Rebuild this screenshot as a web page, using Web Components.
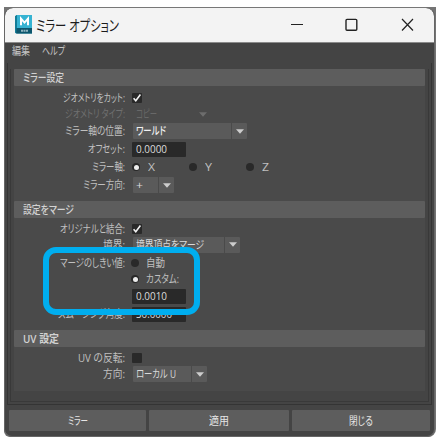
<!DOCTYPE html>
<html lang="ja">
<head>
<meta charset="utf-8">
<title>ミラー オプション</title>
<style>
html,body{margin:0;width:440px;height:440px;overflow:hidden;background:#fff}
body{font-family:"Open Sans","Noto Sans CJK JP",sans-serif;font-size:11px}
</style>
</head>
<body>
<mirror-window></mirror-window>
<script>
const define = (name, html, setup) => {
  const t = document.createElement('template');
  t.innerHTML = html;
  customElements.define(name, class extends HTMLElement {
    constructor() { super(); this.attachShadow({mode:'open'}).append(t.content.cloneNode(true)); }
    connectedCallback() { if (setup) setup(this, this.shadowRoot); }
  });
};

// Text condensed or widened to the width given in pixels by "w".
define('fit-text', `<style>
:host{display:inline-block;white-space:pre;line-height:16px;height:16px;flex:none}
span{display:inline-block;transform-origin:0 50%;font-feature-settings:"palt"}
</style><span><slot></slot></span>`, (el, root) => {
  const s = root.querySelector('span'), w = +el.getAttribute('w');
  const natural = s.getBoundingClientRect().width;
  el.style.width = w + 'px';
  if (natural) s.style.transform = 'scaleX(' + w / natural + ')';
});

define('app-icon', `<style>:host{display:block;width:18px;height:19px;flex:none}svg{display:block}</style>
<svg width="18" height="19" viewBox="0 0 18 19"><path d="M0 1.2 2 0h14.5L17 1v17.4H1.5L0 17z" fill="#168ba8"/><path d="M2 0h15v13H2z" fill="#36b3d2"/><path d="M0 1.2 2 0v13l-1 5.4-1-1z" fill="#147c97"/><path d="M1.5 13H17v5.6H1.2z" fill="#0d566d"/><path d="M6 10.2V3.6l3.5 4L13 3.6v6.6" fill="none" stroke="#fff" stroke-width="2"/><path d="M6 15.8h7" stroke="#8fb4c0" stroke-width="2" stroke-dasharray="2 .5"/></svg>`);

define('window-controls', `<style>:host{display:block;flex:none;margin-left:auto;width:144px;height:35px}svg{display:block}</style>
<svg width="144" height="35" viewBox="0 0 144 35" fill="none" stroke="#222" stroke-width="1.2"><path d="M1 16.5h12"/><rect x="56" y="11.4" width="10.8" height="10.8" rx="1" stroke-width="1.4"/><path d="m112 11 11 11.5M123 11l-11 11.5"/></svg>`);

define('title-bar', `<style>
:host{display:flex;align-items:center;height:34px;background:#f3f3f3;border-radius:8px 8px 0 0;padding-left:10px;font-size:15px;color:#1c1c1c;border-bottom:1px solid #8a8a8a}
app-icon{margin-top:-1px}
fit-text{margin:-1px 0 0 3px}
</style><app-icon></app-icon><fit-text w="83"><slot></slot></fit-text><window-controls></window-controls>`);

define('menu-bar', `<style>:host{display:flex;gap:12px;height:20px;padding:0 7px;box-sizing:border-box;color:#c5c5c5}</style><slot></slot>`);

define('option-section', `<style>
:host{display:block;background:#4a4a4a}
header{height:17px;background:#5d5d5d;display:flex;align-items:center;padding-left:9px;color:#d2d2d2;font-weight:500;box-sizing:border-box;border-radius:1px}
:host([strong]) header{font-weight:600}
</style><header><slot name="title"></slot></header><slot></slot>`);

define('option-row', `<style>
:host{display:flex;align-items:center;color:#c0c0c0}
.label{width:111px;flex:none;display:flex;justify-content:flex-end}
.field{margin-left:7px;display:flex;align-items:center}
:host([off]){color:#707070}
</style><div class="label"><slot name="label"></slot></div><div class="field"><slot></slot></div>`,
 el => { el.style.height = el.getAttribute('h') + 'px'; });

define('check-box', `<style>:host{display:block;width:10px;height:10px;background:#292929;border-radius:1px}svg{display:none}:host([checked]) svg{display:block}</style>
<svg width="10" height="10" viewBox="0 0 10 10"><path d="m1.6 5.2 2.2 2.5L8.4 1.6" stroke="#f2f2f2" stroke-width="1.6" fill="none"/></svg>`);

define('radio-dot', `<style>
:host{display:flex;align-items:center;height:16px}
i{width:8px;height:8px;border-radius:50%;background:#292929;display:flex;align-items:center;justify-content:center;margin-right:7px;flex:none}
:host([checked]) i::after{content:"";width:5px;height:5px;border-radius:50%;background:#ececec}
</style><i></i><slot></slot>`);

define('combo-box', `<style>
:host{display:flex;gap:1px;height:16px;margin-left:1px}
.v{background:#5a5a5a;padding-left:3px;box-sizing:border-box;display:flex;align-items:center;color:#dadada;border-radius:1px 0 0 1px}
.a{width:15px;background:#5a5a5a;display:flex;align-items:center;justify-content:center;border-radius:0 1px 1px 0}
.a svg{fill:#cdcdcd}
:host([bright]) .v{color:#f0f0f0;font-weight:500}
:host([off]) .v{background:none;color:#686868}
:host([off]) .a{background:none}
:host([off]) .a svg{fill:#6d6d6d}
</style><div class="v"><slot></slot></div><div class="a"><svg width="8" height="5" viewBox="0 0 8 5"><path d="M0 .3h8L4 4.8z"/></svg></div>`,
 (el, root) => { root.querySelector('.v').style.width = el.getAttribute('w') + 'px'; });

define('number-field', `<style>:host{display:flex;align-items:center;width:54px;height:15px;background:#292929;border-radius:1px;box-sizing:border-box;padding-left:4px;color:#dadada}</style><slot></slot>`);

define('push-button', `<style>:host{display:flex;align-items:center;justify-content:center;background:#5d5d5d;color:#e6e6e6;border-radius:1px;height:21px}</style><slot></slot>`);

define('highlight-frame', `<style>:host{position:absolute;left:43px;top:247px;width:157px;height:68px;box-sizing:border-box;border:6px solid #00aeef;border-radius:13px}</style>`);

define('mirror-window', `<style>
:host{display:block;width:440px;height:440px;position:relative}
.win{box-sizing:border-box;margin:0;width:431px;height:430px;border:1px solid #666;border-top-color:#777;background:#444;border-radius:9px 9px 8px 8px;overflow:hidden}
.back{position:absolute;left:4px;top:7px;width:432px;height:430px;background:#747474;border-radius:0 0 8px 6px}
.page{padding:7px 0 0 4px;position:relative}
.panel{box-sizing:border-box;margin:0 2px;height:342px;border:1px solid #343434;border-top:0;padding:6px 2px 3px 2px;position:relative}
.inner{box-sizing:border-box;height:333px;border:1px solid #393939;border-top:0;padding:0 3px 10px}
.one{height:132px}.two{height:129px}.three{height:61px}
.body{padding-top:4px}.two .body,.three .body{padding-top:3px}
.set{display:flex}
.set radio-dot{width:57px;box-sizing:border-box}
.set radio-dot fit-text{margin-left:1px}
.shift{margin-left:-1px}
footer{display:grid;grid-template-columns:137px 140px 138px;gap:3px;padding:5px 4px}
</style>
<div class="back"></div>
<div class="page"><div class="win">
<title-bar>ミラー オプション</title-bar>
<menu-bar><fit-text w="18">編集</fit-text><fit-text w="23">ヘルプ</fit-text></menu-bar>
<div class="panel"><div class="inner">
<option-section class="one"><fit-text slot="title" w="41">ミラー設定</fit-text><div class="body">
<option-row h="16"><fit-text slot="label" w="62">ジオメトリをカット:</fit-text><check-box checked></check-box></option-row>
<option-row h="16" off><fit-text slot="label" w="60">ジオメトリ タイプ:</fit-text><combo-box w="61" off><fit-text w="21">コピー</fit-text></combo-box></option-row>
<option-row h="18"><fit-text slot="label" w="60">ミラー軸の位置:</fit-text><combo-box w="98" bright><fit-text w="30">ワールド</fit-text></combo-box></option-row>
<option-row h="18"><fit-text slot="label" w="37">オフセット:</fit-text><number-field><fit-text w="31">0.0000</fit-text></number-field></option-row>
<option-row h="18"><fit-text slot="label" w="33">ミラー軸:</fit-text><div class="set"><radio-dot checked><fit-text w="7">X</fit-text></radio-dot><radio-dot><fit-text w="7">Y</fit-text></radio-dot><radio-dot><fit-text w="7">Z</fit-text></radio-dot></div></option-row>
<option-row h="18"><fit-text slot="label" w="42">ミラー方向:</fit-text><combo-box w="25"><fit-text w="7">+</fit-text></combo-box></option-row>
</div></option-section>
<option-section class="two"><fit-text slot="title" w="51">設定をマージ</fit-text><div class="body">
<option-row h="16"><fit-text slot="label" w="65">オリジナルと結合:</fit-text><check-box checked></check-box></option-row>
<option-row h="15"><fit-text slot="label" w="22">境界:</fit-text><combo-box w="91"><fit-text w="68">境界頂点をマージ</fit-text></combo-box></option-row>
<option-row h="22"><fit-text slot="label" w="65">マージのしきい値:</fit-text><radio-dot class="shift"><fit-text w="19">自動</fit-text></radio-dot></option-row>
<option-row h="10"><radio-dot checked class="shift"><fit-text w="33">カスタム:</fit-text></radio-dot></option-row>
<option-row h="24"><number-field><fit-text w="31">0.0010</fit-text></number-field></option-row>
<option-row h="12"><fit-text slot="label" w="67">スムージング角度:</fit-text><number-field><fit-text w="36">30.0000</fit-text></number-field></option-row>
</div></option-section>
<option-section class="three" strong><fit-text slot="title" w="36">UV 設定</fit-text><div class="body">
<option-row h="16"><fit-text slot="label" w="47">UV の反転:</fit-text><check-box></check-box></option-row>
<option-row h="16"><fit-text slot="label" w="22">方向:</fit-text><combo-box w="58"><fit-text w="40">ローカル U</fit-text></combo-box></option-row>
</div></option-section>
</div></div>
<footer><push-button><fit-text w="20">ミラー</fit-text></push-button><push-button><fit-text w="20">適用</fit-text></push-button><push-button><fit-text w="24">閉じる</fit-text></push-button></footer>
</div></div>
<highlight-frame></highlight-frame>`);
</script>
</body>
</html>
